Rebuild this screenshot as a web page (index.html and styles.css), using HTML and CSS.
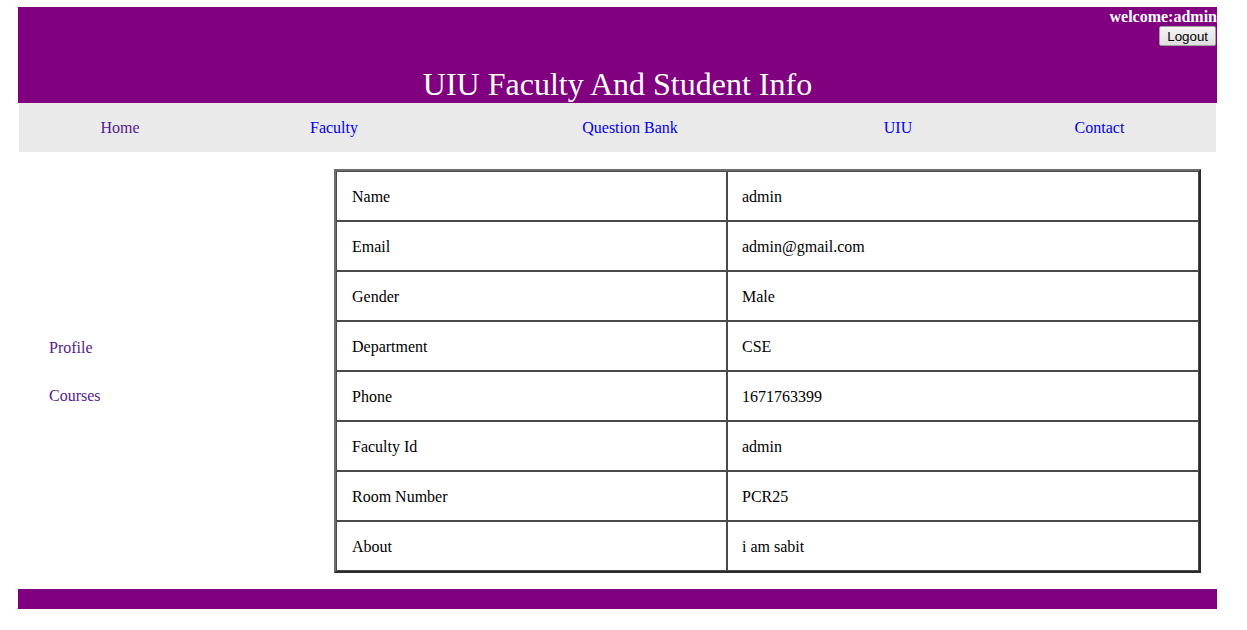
FILE: index.html
```html
<!DOCTYPE html>
<html>
<head>
<meta charset="utf-8">
<title>UIU Faculty And Student Info</title>
<link rel="stylesheet" href="styles.css">
</head>
<body>
<div class="page">
  <header class="header">
    <div class="welcome">welcome:admin</div>
    <div class="logout-row"><button class="logout" type="button">Logout</button></div>
    <h1 class="title">UIU Faculty And Student Info</h1>
  </header>
  <nav class="nav">
    <div class="nav-cell"><a class="link visited" href="#">Home</a></div>
    <div class="nav-cell"><a class="link" href="#">Faculty</a></div>
    <div class="nav-cell"><a class="link" href="#">Question Bank</a></div>
    <div class="nav-cell"><a class="link" href="#">UIU</a></div>
    <div class="nav-cell"><a class="link" href="#">Contact</a></div>
  </nav>
  <main class="content">
    <aside class="sidebar">
      <a class="link visited" href="#">Profile</a>
      <a class="link visited" href="#">Courses</a>
    </aside>
    <table class="info">
      <tbody>
        <tr><td class="key">Name</td><td class="val">admin</td></tr>
        <tr><td class="key">Email</td><td class="val">admin@gmail.com</td></tr>
        <tr><td class="key">Gender</td><td class="val">Male</td></tr>
        <tr><td class="key">Department</td><td class="val">CSE</td></tr>
        <tr><td class="key">Phone</td><td class="val">1671763399</td></tr>
        <tr><td class="key">Faculty Id</td><td class="val">admin</td></tr>
        <tr><td class="key">Room Number</td><td class="val">PCR25</td></tr>
        <tr><td class="key">About</td><td class="val">i am sabit</td></tr>
      </tbody>
    </table>
  </main>
  <footer class="footer"></footer>
</div>
</body>
</html>
```

FILE: styles.css
```css
html, body {
  margin: 0;
  padding: 0;
  background: #fff;
}

body {
  font-family: "Liberation Serif", "Times New Roman", serif;
  font-size: 16px;
  color: #000;
}

.page {
  width: 1199px;
  padding: 7px 0 0 18px;
}

.header {
  background: #800080;
  height: 96px;
  display: flex;
  flex-direction: column;
  padding-top: 1px;
  box-sizing: border-box;
}

.welcome {
  text-align: right;
  color: #fff;
  font-weight: bold;
  font-size: 16px;
  line-height: 18px;
}

.logout-row {
  display: flex;
  justify-content: flex-end;
  margin-top: 0;
  padding-right: 1px;
}

.logout {
  font-family: "Liberation Sans", Arial, sans-serif;
  font-size: 13.33px;
  height: 20px;
  padding: 0 7px;
  border: 1px solid #a0a0a0;
  border-radius: 2px;
  background: linear-gradient(#f6f6f6, #dedede);
  color: #000;
}

.title {
  margin: auto 0 0 0;
  font-weight: normal;
  font-size: 32px;
  line-height: 37px;
  text-align: center;
  color: #fff;
}

.nav {
  margin: 0 1px;
  height: 49px;
  padding-top: 1px;
  box-sizing: border-box;
  background: #eaeaea;
  display: grid;
  grid-template-columns: 202px 226px 366px 170px 233px;
  align-items: center;
}

.nav-cell {
  text-align: center;
}

.link {
  color: #0000ee;
  text-decoration: none;
}

.link.visited {
  color: #551a8b;
}

.content {
  display: flex;
  align-items: stretch;
  padding-top: 17px;
}

.sidebar {
  width: 316px;
  display: flex;
  flex-direction: column;
  justify-content: center;
  gap: 30px;
  padding: 2px 0 0 31px;
  box-sizing: border-box;
  line-height: 18px;
}

.info {
  width: 867px;
  border-collapse: separate;
  border-spacing: 0;
  border-style: solid;
  border-width: 2px;
  border-color: #6e6e6e #2c2c2c #2c2c2c #6e6e6e;
}

.info td {
  height: 50px;
  box-sizing: border-box;
  padding: 2px 15px 0 15px;
  border: 1px solid #4a4a4a;
  vertical-align: middle;
}

.info td.key {
  width: 391px;
}

.info td.val {
  width: 472px;
  padding-left: 14px;
}

.footer {
  margin-top: 16px;
  height: 20px;
  background: #800080;
}
```
